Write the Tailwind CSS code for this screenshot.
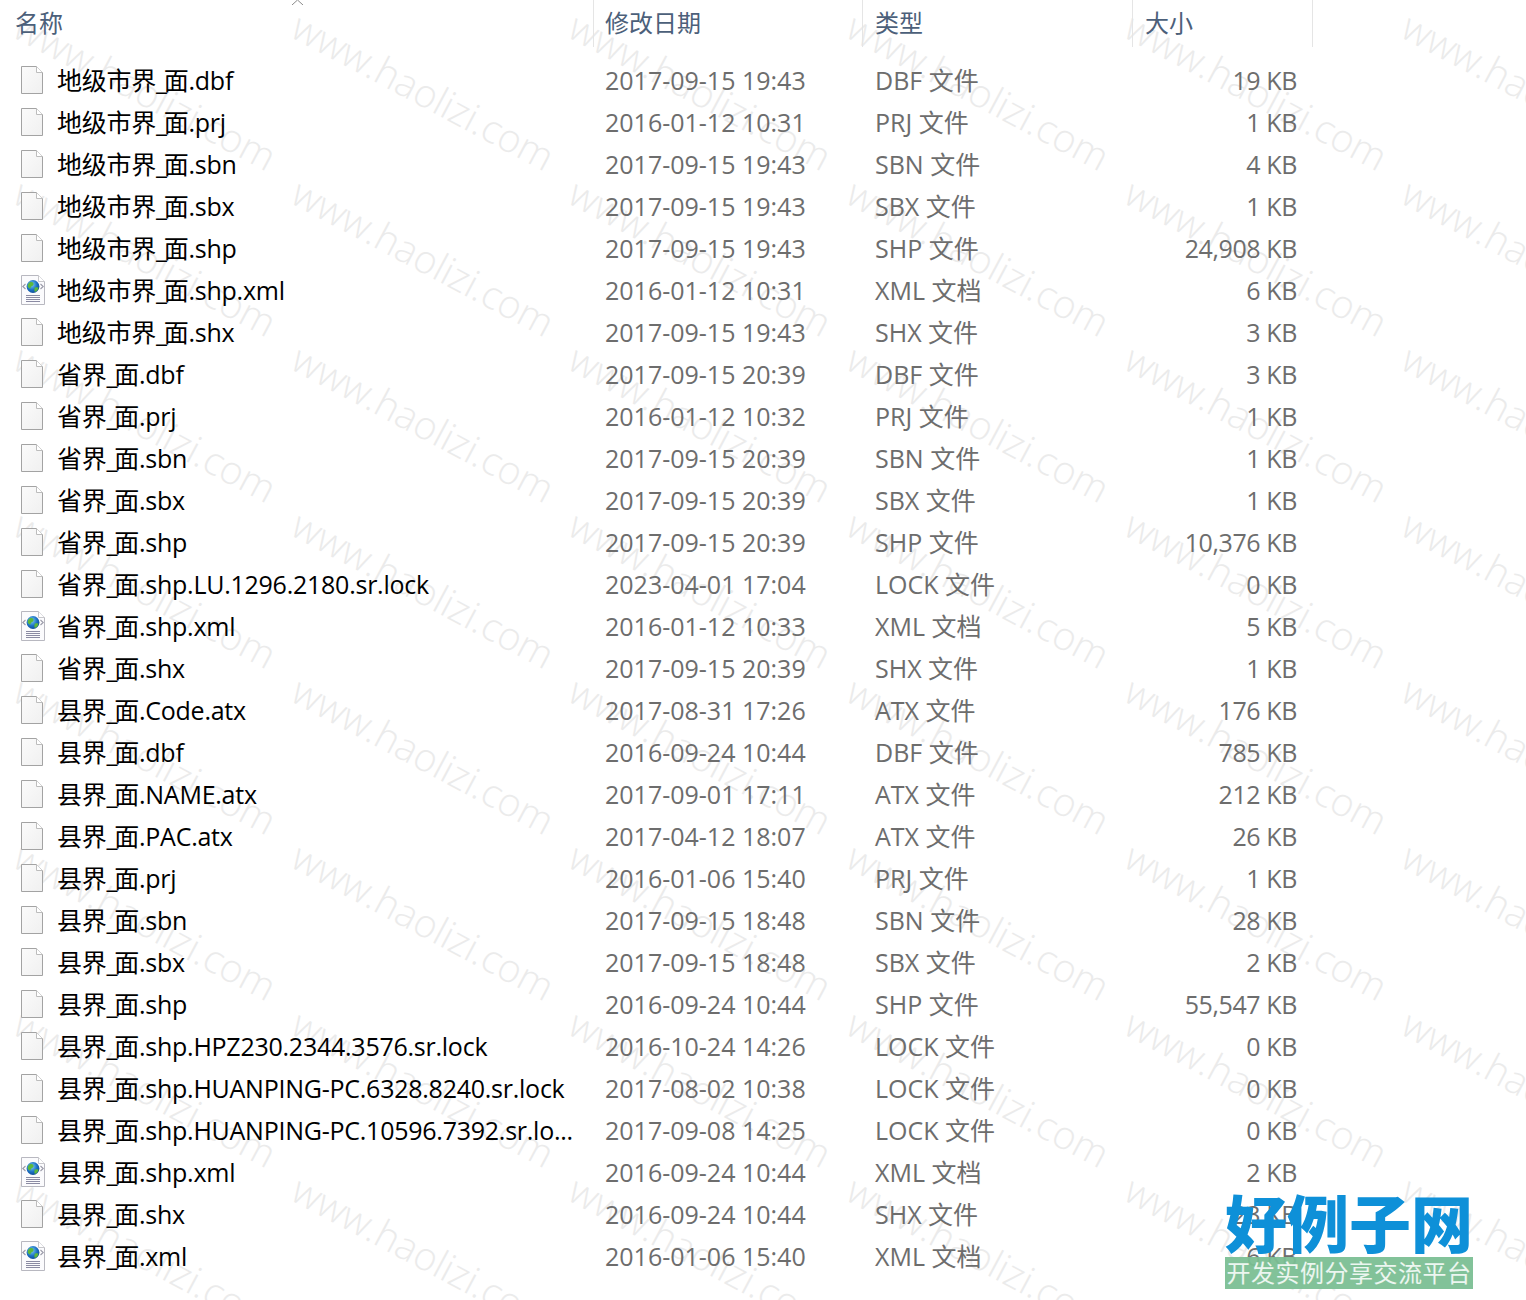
<!DOCTYPE html>
<html lang="zh-CN">
<head>
<meta charset="utf-8">
<title>文件列表</title>
<script src="https://cdn.jsdelivr.net/npm/@tailwindcss/browser@4"></script>
</head>
<body class="bg-white">
<svg width="0" height="0" class="absolute">
  <defs>
    <linearGradient id="pg" x1="0" y1="0" x2="1" y2="1"><stop offset="0" stop-color="#fbfbfb"/><stop offset="1" stop-color="#f0f0f0"/></linearGradient>
    <radialGradient id="gl" cx=".4" cy=".35" r=".7"><stop offset="0" stop-color="#7fd0f5"/><stop offset=".6" stop-color="#1a6fc4"/><stop offset="1" stop-color="#0f4a94"/></radialGradient>
    <symbol id="file" viewBox="0 0 22 28">
      <path d="M.5.5H15.5L21.5 6.5V27.5H.5Z" fill="url(#pg)" stroke="#a3a3a3"/>
      <path d="M15.5.5V6.5H21.5" fill="#fff" stroke="#bdbdbd"/>
    </symbol>
    <symbol id="xml" viewBox="0 0 26 32">
      <path d="M1.5 1.5H18.5L24.5 7.5V30.5H1.5Z" fill="#fbfbfd" stroke="#b8b8c0"/>
      <path d="M18.5 1.5V7.5H24.5" fill="#fff" stroke="#c8c8cc"/>
      <circle cx="13" cy="12.500" r="6.400" fill="url(#gl)"/>
      <path d="M9.500 8.500c2.500-1.200 4.500 0 4 2s-2.300 1.200-2.800 3.100-1.800.6-3-1.100c0-1.700.6-3.100 1.800-4ZM15 13.500c1.700-.6 3.500 0 3.500.6-.6 1.700-1.700 3.400-3.500 3.800-.9-1.100-.9-3.200 0-4.400Z" fill="#5cb83c"/>
      <path d="M5.500 10 2.800 12.500l2.700 2.500M20.500 10l2.700 2.500-2.700 2.500" fill="none" stroke="#9a9aa8" stroke-width="1.100"/>
      <path d="M6 21.500H20M6 23.500H20M6 25.500H20M6 27.500H20" stroke="#8b8ba3"/>
    </symbol>
  </defs>
</svg>

<div class="relative h-[1300px] w-[1526px] overflow-hidden font-['Open_Sans','Noto_Sans_CJK_SC',sans-serif] text-[25px] leading-[42px]">

  <div class="absolute left-[27px] top-[5px] grid grid-cols-[repeat(6,277.7px)] auto-rows-[166.100px] text-[39px] leading-none font-light text-[#ebebeb]">
    <span class="origin-top-left rotate-[28deg] whitespace-nowrap">www.haolizi.com</span><span class="origin-top-left rotate-[28deg] whitespace-nowrap">www.haolizi.com</span><span class="origin-top-left rotate-[28deg] whitespace-nowrap">www.haolizi.com</span><span class="origin-top-left rotate-[28deg] whitespace-nowrap">www.haolizi.com</span><span class="origin-top-left rotate-[28deg] whitespace-nowrap">www.haolizi.com</span><span class="origin-top-left rotate-[28deg] whitespace-nowrap">www.haolizi.com</span>
    <span class="origin-top-left rotate-[28deg] whitespace-nowrap">www.haolizi.com</span><span class="origin-top-left rotate-[28deg] whitespace-nowrap">www.haolizi.com</span><span class="origin-top-left rotate-[28deg] whitespace-nowrap">www.haolizi.com</span><span class="origin-top-left rotate-[28deg] whitespace-nowrap">www.haolizi.com</span><span class="origin-top-left rotate-[28deg] whitespace-nowrap">www.haolizi.com</span><span class="origin-top-left rotate-[28deg] whitespace-nowrap">www.haolizi.com</span>
    <span class="origin-top-left rotate-[28deg] whitespace-nowrap">www.haolizi.com</span><span class="origin-top-left rotate-[28deg] whitespace-nowrap">www.haolizi.com</span><span class="origin-top-left rotate-[28deg] whitespace-nowrap">www.haolizi.com</span><span class="origin-top-left rotate-[28deg] whitespace-nowrap">www.haolizi.com</span><span class="origin-top-left rotate-[28deg] whitespace-nowrap">www.haolizi.com</span><span class="origin-top-left rotate-[28deg] whitespace-nowrap">www.haolizi.com</span>
    <span class="origin-top-left rotate-[28deg] whitespace-nowrap">www.haolizi.com</span><span class="origin-top-left rotate-[28deg] whitespace-nowrap">www.haolizi.com</span><span class="origin-top-left rotate-[28deg] whitespace-nowrap">www.haolizi.com</span><span class="origin-top-left rotate-[28deg] whitespace-nowrap">www.haolizi.com</span><span class="origin-top-left rotate-[28deg] whitespace-nowrap">www.haolizi.com</span><span class="origin-top-left rotate-[28deg] whitespace-nowrap">www.haolizi.com</span>
    <span class="origin-top-left rotate-[28deg] whitespace-nowrap">www.haolizi.com</span><span class="origin-top-left rotate-[28deg] whitespace-nowrap">www.haolizi.com</span><span class="origin-top-left rotate-[28deg] whitespace-nowrap">www.haolizi.com</span><span class="origin-top-left rotate-[28deg] whitespace-nowrap">www.haolizi.com</span><span class="origin-top-left rotate-[28deg] whitespace-nowrap">www.haolizi.com</span><span class="origin-top-left rotate-[28deg] whitespace-nowrap">www.haolizi.com</span>
    <span class="origin-top-left rotate-[28deg] whitespace-nowrap">www.haolizi.com</span><span class="origin-top-left rotate-[28deg] whitespace-nowrap">www.haolizi.com</span><span class="origin-top-left rotate-[28deg] whitespace-nowrap">www.haolizi.com</span><span class="origin-top-left rotate-[28deg] whitespace-nowrap">www.haolizi.com</span><span class="origin-top-left rotate-[28deg] whitespace-nowrap">www.haolizi.com</span><span class="origin-top-left rotate-[28deg] whitespace-nowrap">www.haolizi.com</span>
    <span class="origin-top-left rotate-[28deg] whitespace-nowrap">www.haolizi.com</span><span class="origin-top-left rotate-[28deg] whitespace-nowrap">www.haolizi.com</span><span class="origin-top-left rotate-[28deg] whitespace-nowrap">www.haolizi.com</span><span class="origin-top-left rotate-[28deg] whitespace-nowrap">www.haolizi.com</span><span class="origin-top-left rotate-[28deg] whitespace-nowrap">www.haolizi.com</span><span class="origin-top-left rotate-[28deg] whitespace-nowrap">www.haolizi.com</span>
    <span class="origin-top-left rotate-[28deg] whitespace-nowrap">www.haolizi.com</span><span class="origin-top-left rotate-[28deg] whitespace-nowrap">www.haolizi.com</span><span class="origin-top-left rotate-[28deg] whitespace-nowrap">www.haolizi.com</span><span class="origin-top-left rotate-[28deg] whitespace-nowrap">www.haolizi.com</span><span class="origin-top-left rotate-[28deg] whitespace-nowrap">www.haolizi.com</span><span class="origin-top-left rotate-[28deg] whitespace-nowrap">www.haolizi.com</span>
  </div>

  <div class="relative">
    <div class="flex h-[47px] text-[24px] leading-[46px] text-[#4c607a]">
      <div class="relative w-[593px] pl-[15px]">名称
        <svg class="absolute left-[291px] top-0 h-[5px] w-[13px]" viewBox="0 0 13 5"><path d="M1 5 6.500 0 12 5" fill="none" stroke="#8a8a8a"/></svg>
      </div>
      <div class="w-[269px] border-l border-[#e5e5e5] pl-[11px]">修改日期</div>
      <div class="w-[270px] border-l border-[#e5e5e5] pl-3">类型</div>
      <div class="w-[181px] border-x border-[#e5e5e5] pl-3">大小</div>
    </div>

    <div class="mt-[12px] text-[#6d6d6d] [font-stretch:88%]">
      <div class="flex h-[42px] items-center"><div class="flex w-[593px] items-center text-black tracking-[-0.25px]"><svg class="ml-[21px] mr-[14px] h-[28px] w-[22px]"><use href="#file"/></svg>地级市界<span class="mr-[-3px]">_</span>面.dbf</div><div class="w-[269px] pl-3">2017-09-15 19:43</div><div class="w-[270px] pl-[13px]">DBF 文件</div><div class="w-[165px] text-right tracking-[-0.4px]">19 KB</div></div>
      <div class="flex h-[42px] items-center"><div class="flex w-[593px] items-center text-black tracking-[-0.25px]"><svg class="ml-[21px] mr-[14px] h-[28px] w-[22px]"><use href="#file"/></svg>地级市界<span class="mr-[-3px]">_</span>面.prj</div><div class="w-[269px] pl-3">2016-01-12 10:31</div><div class="w-[270px] pl-[13px]">PRJ 文件</div><div class="w-[165px] text-right tracking-[-0.4px]">1 KB</div></div>
      <div class="flex h-[42px] items-center"><div class="flex w-[593px] items-center text-black tracking-[-0.25px]"><svg class="ml-[21px] mr-[14px] h-[28px] w-[22px]"><use href="#file"/></svg>地级市界<span class="mr-[-3px]">_</span>面.sbn</div><div class="w-[269px] pl-3">2017-09-15 19:43</div><div class="w-[270px] pl-[13px]">SBN 文件</div><div class="w-[165px] text-right tracking-[-0.4px]">4 KB</div></div>
      <div class="flex h-[42px] items-center"><div class="flex w-[593px] items-center text-black tracking-[-0.25px]"><svg class="ml-[21px] mr-[14px] h-[28px] w-[22px]"><use href="#file"/></svg>地级市界<span class="mr-[-3px]">_</span>面.sbx</div><div class="w-[269px] pl-3">2017-09-15 19:43</div><div class="w-[270px] pl-[13px]">SBX 文件</div><div class="w-[165px] text-right tracking-[-0.4px]">1 KB</div></div>
      <div class="flex h-[42px] items-center"><div class="flex w-[593px] items-center text-black tracking-[-0.25px]"><svg class="ml-[21px] mr-[14px] h-[28px] w-[22px]"><use href="#file"/></svg>地级市界<span class="mr-[-3px]">_</span>面.shp</div><div class="w-[269px] pl-3">2017-09-15 19:43</div><div class="w-[270px] pl-[13px]">SHP 文件</div><div class="w-[165px] text-right tracking-[-0.4px]">24,908 KB</div></div>
      <div class="flex h-[42px] items-center"><div class="flex w-[593px] items-center text-black tracking-[-0.25px]"><svg class="ml-[20px] mr-[11px] h-[32px] w-[26px]"><use href="#xml"/></svg>地级市界<span class="mr-[-3px]">_</span>面.shp.xml</div><div class="w-[269px] pl-3">2016-01-12 10:31</div><div class="w-[270px] pl-[13px]">XML 文档</div><div class="w-[165px] text-right tracking-[-0.4px]">6 KB</div></div>
      <div class="flex h-[42px] items-center"><div class="flex w-[593px] items-center text-black tracking-[-0.25px]"><svg class="ml-[21px] mr-[14px] h-[28px] w-[22px]"><use href="#file"/></svg>地级市界<span class="mr-[-3px]">_</span>面.shx</div><div class="w-[269px] pl-3">2017-09-15 19:43</div><div class="w-[270px] pl-[13px]">SHX 文件</div><div class="w-[165px] text-right tracking-[-0.4px]">3 KB</div></div>
      <div class="flex h-[42px] items-center"><div class="flex w-[593px] items-center text-black tracking-[-0.25px]"><svg class="ml-[21px] mr-[14px] h-[28px] w-[22px]"><use href="#file"/></svg>省界<span class="mr-[-3px]">_</span>面.dbf</div><div class="w-[269px] pl-3">2017-09-15 20:39</div><div class="w-[270px] pl-[13px]">DBF 文件</div><div class="w-[165px] text-right tracking-[-0.4px]">3 KB</div></div>
      <div class="flex h-[42px] items-center"><div class="flex w-[593px] items-center text-black tracking-[-0.25px]"><svg class="ml-[21px] mr-[14px] h-[28px] w-[22px]"><use href="#file"/></svg>省界<span class="mr-[-3px]">_</span>面.prj</div><div class="w-[269px] pl-3">2016-01-12 10:32</div><div class="w-[270px] pl-[13px]">PRJ 文件</div><div class="w-[165px] text-right tracking-[-0.4px]">1 KB</div></div>
      <div class="flex h-[42px] items-center"><div class="flex w-[593px] items-center text-black tracking-[-0.25px]"><svg class="ml-[21px] mr-[14px] h-[28px] w-[22px]"><use href="#file"/></svg>省界<span class="mr-[-3px]">_</span>面.sbn</div><div class="w-[269px] pl-3">2017-09-15 20:39</div><div class="w-[270px] pl-[13px]">SBN 文件</div><div class="w-[165px] text-right tracking-[-0.4px]">1 KB</div></div>
      <div class="flex h-[42px] items-center"><div class="flex w-[593px] items-center text-black tracking-[-0.25px]"><svg class="ml-[21px] mr-[14px] h-[28px] w-[22px]"><use href="#file"/></svg>省界<span class="mr-[-3px]">_</span>面.sbx</div><div class="w-[269px] pl-3">2017-09-15 20:39</div><div class="w-[270px] pl-[13px]">SBX 文件</div><div class="w-[165px] text-right tracking-[-0.4px]">1 KB</div></div>
      <div class="flex h-[42px] items-center"><div class="flex w-[593px] items-center text-black tracking-[-0.25px]"><svg class="ml-[21px] mr-[14px] h-[28px] w-[22px]"><use href="#file"/></svg>省界<span class="mr-[-3px]">_</span>面.shp</div><div class="w-[269px] pl-3">2017-09-15 20:39</div><div class="w-[270px] pl-[13px]">SHP 文件</div><div class="w-[165px] text-right tracking-[-0.4px]">10,376 KB</div></div>
      <div class="flex h-[42px] items-center"><div class="flex w-[593px] items-center text-black tracking-[-0.25px]"><svg class="ml-[21px] mr-[14px] h-[28px] w-[22px]"><use href="#file"/></svg>省界<span class="mr-[-3px]">_</span>面.shp.LU.1296.2180.sr.lock</div><div class="w-[269px] pl-3">2023-04-01 17:04</div><div class="w-[270px] pl-[13px]">LOCK 文件</div><div class="w-[165px] text-right tracking-[-0.4px]">0 KB</div></div>
      <div class="flex h-[42px] items-center"><div class="flex w-[593px] items-center text-black tracking-[-0.25px]"><svg class="ml-[20px] mr-[11px] h-[32px] w-[26px]"><use href="#xml"/></svg>省界<span class="mr-[-3px]">_</span>面.shp.xml</div><div class="w-[269px] pl-3">2016-01-12 10:33</div><div class="w-[270px] pl-[13px]">XML 文档</div><div class="w-[165px] text-right tracking-[-0.4px]">5 KB</div></div>
      <div class="flex h-[42px] items-center"><div class="flex w-[593px] items-center text-black tracking-[-0.25px]"><svg class="ml-[21px] mr-[14px] h-[28px] w-[22px]"><use href="#file"/></svg>省界<span class="mr-[-3px]">_</span>面.shx</div><div class="w-[269px] pl-3">2017-09-15 20:39</div><div class="w-[270px] pl-[13px]">SHX 文件</div><div class="w-[165px] text-right tracking-[-0.4px]">1 KB</div></div>
      <div class="flex h-[42px] items-center"><div class="flex w-[593px] items-center text-black tracking-[-0.25px]"><svg class="ml-[21px] mr-[14px] h-[28px] w-[22px]"><use href="#file"/></svg>县界<span class="mr-[-3px]">_</span>面.Code.atx</div><div class="w-[269px] pl-3">2017-08-31 17:26</div><div class="w-[270px] pl-[13px]">ATX 文件</div><div class="w-[165px] text-right tracking-[-0.4px]">176 KB</div></div>
      <div class="flex h-[42px] items-center"><div class="flex w-[593px] items-center text-black tracking-[-0.25px]"><svg class="ml-[21px] mr-[14px] h-[28px] w-[22px]"><use href="#file"/></svg>县界<span class="mr-[-3px]">_</span>面.dbf</div><div class="w-[269px] pl-3">2016-09-24 10:44</div><div class="w-[270px] pl-[13px]">DBF 文件</div><div class="w-[165px] text-right tracking-[-0.4px]">785 KB</div></div>
      <div class="flex h-[42px] items-center"><div class="flex w-[593px] items-center text-black tracking-[-0.25px]"><svg class="ml-[21px] mr-[14px] h-[28px] w-[22px]"><use href="#file"/></svg>县界<span class="mr-[-3px]">_</span>面.NAME.atx</div><div class="w-[269px] pl-3">2017-09-01 17:11</div><div class="w-[270px] pl-[13px]">ATX 文件</div><div class="w-[165px] text-right tracking-[-0.4px]">212 KB</div></div>
      <div class="flex h-[42px] items-center"><div class="flex w-[593px] items-center text-black tracking-[-0.25px]"><svg class="ml-[21px] mr-[14px] h-[28px] w-[22px]"><use href="#file"/></svg>县界<span class="mr-[-3px]">_</span>面.PAC.atx</div><div class="w-[269px] pl-3">2017-04-12 18:07</div><div class="w-[270px] pl-[13px]">ATX 文件</div><div class="w-[165px] text-right tracking-[-0.4px]">26 KB</div></div>
      <div class="flex h-[42px] items-center"><div class="flex w-[593px] items-center text-black tracking-[-0.25px]"><svg class="ml-[21px] mr-[14px] h-[28px] w-[22px]"><use href="#file"/></svg>县界<span class="mr-[-3px]">_</span>面.prj</div><div class="w-[269px] pl-3">2016-01-06 15:40</div><div class="w-[270px] pl-[13px]">PRJ 文件</div><div class="w-[165px] text-right tracking-[-0.4px]">1 KB</div></div>
      <div class="flex h-[42px] items-center"><div class="flex w-[593px] items-center text-black tracking-[-0.25px]"><svg class="ml-[21px] mr-[14px] h-[28px] w-[22px]"><use href="#file"/></svg>县界<span class="mr-[-3px]">_</span>面.sbn</div><div class="w-[269px] pl-3">2017-09-15 18:48</div><div class="w-[270px] pl-[13px]">SBN 文件</div><div class="w-[165px] text-right tracking-[-0.4px]">28 KB</div></div>
      <div class="flex h-[42px] items-center"><div class="flex w-[593px] items-center text-black tracking-[-0.25px]"><svg class="ml-[21px] mr-[14px] h-[28px] w-[22px]"><use href="#file"/></svg>县界<span class="mr-[-3px]">_</span>面.sbx</div><div class="w-[269px] pl-3">2017-09-15 18:48</div><div class="w-[270px] pl-[13px]">SBX 文件</div><div class="w-[165px] text-right tracking-[-0.4px]">2 KB</div></div>
      <div class="flex h-[42px] items-center"><div class="flex w-[593px] items-center text-black tracking-[-0.25px]"><svg class="ml-[21px] mr-[14px] h-[28px] w-[22px]"><use href="#file"/></svg>县界<span class="mr-[-3px]">_</span>面.shp</div><div class="w-[269px] pl-3">2016-09-24 10:44</div><div class="w-[270px] pl-[13px]">SHP 文件</div><div class="w-[165px] text-right tracking-[-0.4px]">55,547 KB</div></div>
      <div class="flex h-[42px] items-center"><div class="flex w-[593px] items-center text-black tracking-[-0.25px]"><svg class="ml-[21px] mr-[14px] h-[28px] w-[22px]"><use href="#file"/></svg>县界<span class="mr-[-3px]">_</span>面.shp.HPZ230.2344.3576.sr.lock</div><div class="w-[269px] pl-3">2016-10-24 14:26</div><div class="w-[270px] pl-[13px]">LOCK 文件</div><div class="w-[165px] text-right tracking-[-0.4px]">0 KB</div></div>
      <div class="flex h-[42px] items-center"><div class="flex w-[593px] items-center text-black tracking-[-0.25px]"><svg class="ml-[21px] mr-[14px] h-[28px] w-[22px]"><use href="#file"/></svg>县界<span class="mr-[-3px]">_</span>面.shp.HUANPING-PC.6328.8240.sr.lock</div><div class="w-[269px] pl-3">2017-08-02 10:38</div><div class="w-[270px] pl-[13px]">LOCK 文件</div><div class="w-[165px] text-right tracking-[-0.4px]">0 KB</div></div>
      <div class="flex h-[42px] items-center"><div class="flex w-[593px] items-center text-black tracking-[-0.25px]"><svg class="ml-[21px] mr-[14px] h-[28px] w-[22px]"><use href="#file"/></svg>县界<span class="mr-[-3px]">_</span>面.shp.HUANPING-PC.10596.7392.sr.lo...</div><div class="w-[269px] pl-3">2017-09-08 14:25</div><div class="w-[270px] pl-[13px]">LOCK 文件</div><div class="w-[165px] text-right tracking-[-0.4px]">0 KB</div></div>
      <div class="flex h-[42px] items-center"><div class="flex w-[593px] items-center text-black tracking-[-0.25px]"><svg class="ml-[20px] mr-[11px] h-[32px] w-[26px]"><use href="#xml"/></svg>县界<span class="mr-[-3px]">_</span>面.shp.xml</div><div class="w-[269px] pl-3">2016-09-24 10:44</div><div class="w-[270px] pl-[13px]">XML 文档</div><div class="w-[165px] text-right tracking-[-0.4px]">2 KB</div></div>
      <div class="flex h-[42px] items-center"><div class="flex w-[593px] items-center text-black tracking-[-0.25px]"><svg class="ml-[21px] mr-[14px] h-[28px] w-[22px]"><use href="#file"/></svg>县界<span class="mr-[-3px]">_</span>面.shx</div><div class="w-[269px] pl-3">2016-09-24 10:44</div><div class="w-[270px] pl-[13px]">SHX 文件</div><div class="w-[165px] text-right tracking-[-0.4px]">23 KB</div></div>
      <div class="flex h-[42px] items-center"><div class="flex w-[593px] items-center text-black tracking-[-0.25px]"><svg class="ml-[20px] mr-[11px] h-[32px] w-[26px]"><use href="#xml"/></svg>县界<span class="mr-[-3px]">_</span>面.xml</div><div class="w-[269px] pl-3">2016-01-06 15:40</div><div class="w-[270px] pl-[13px]">XML 文档</div><div class="w-[165px] text-right tracking-[-0.4px]">6 KB</div></div>
    </div>
  </div>

  <div class="absolute left-[1225px] top-[1191px] w-[248px]">
    <div class="h-[66px] text-center text-[62px] leading-[66px] font-black whitespace-nowrap text-[#0e90d8]">好例子网</div>
    <div class="h-[32px] bg-[#7bbf94]/95 text-center text-[24px] leading-[32px] tracking-[0.5px] whitespace-nowrap text-white/85">开发实例分享交流平台</div>
  </div>
</div>
</body>
</html>
